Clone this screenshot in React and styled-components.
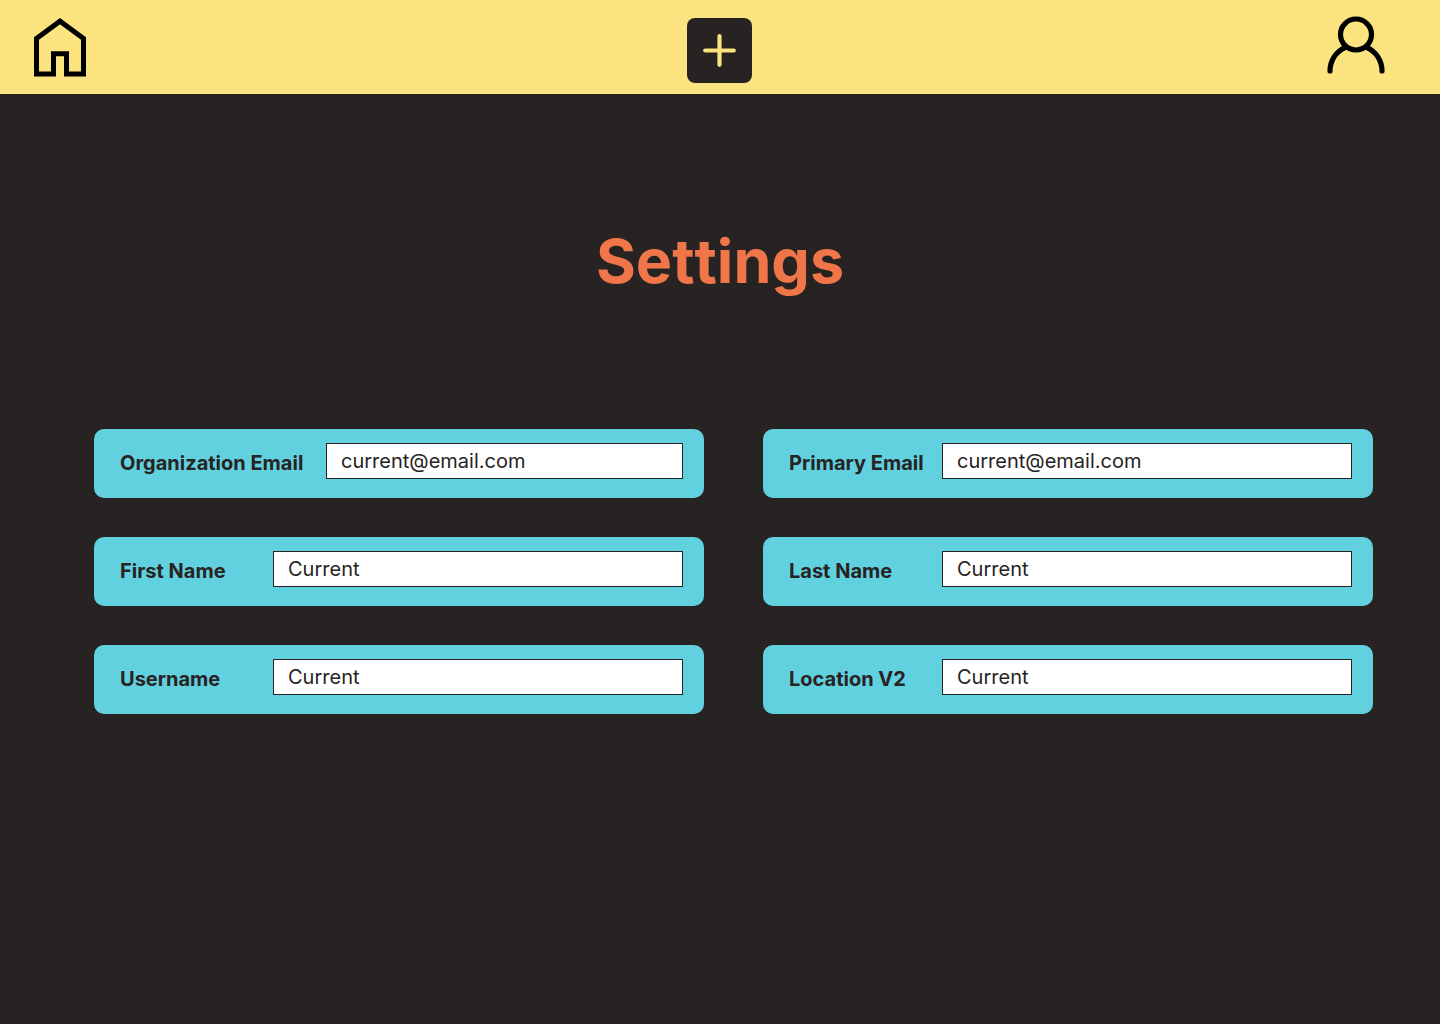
import React from "react";
import styled, { createGlobalStyle } from "styled-components";

const colors = {
  ink: "#272323",
  yellow: "#fbe480",
  orange: "#f0764a",
  aqua: "#61d1df",
};

const GlobalStyle = createGlobalStyle`
  *, *::before, *::after { box-sizing: border-box; }
  body {
    margin: 0;
    background: ${colors.ink};
    color: ${colors.ink};
    font-family: Inter, "Liberation Sans", sans-serif;
  }
`;

const Page = styled.div`
  min-height: 100vh;
  background: ${colors.ink};
`;

const TopBar = styled.header`
  display: grid;
  grid-template-columns: 1fr auto 1fr;
  align-items: start;
  height: 94px;
  padding: 16px 1px 0 0;
  background: ${colors.yellow};
`;

const NavLink = styled.a`
  display: flex;
  justify-self: ${({ $side }) => $side};
  padding: 0 ${({ $side }) => ($side === "end" ? "53px" : "32px")};
  color: #000;
`;

const AddButton = styled.button`
  display: grid;
  place-items: center;
  width: 65px;
  height: 65px;
  margin: 2px 0 0;
  padding: 0;
  border: 0;
  border-radius: 8px;
  background: ${colors.ink};
  color: ${colors.yellow};
  cursor: pointer;
`;

const Main = styled.main`
  padding: 128px 67px 64px 94px;
`;

const Title = styled.h1`
  margin: 0 27px 129px 0;
  color: ${colors.orange};
  font-size: 61px;
  line-height: 78px;
  font-weight: 700;
  font-kerning: none;
  text-align: center;
`;

const SettingsForm = styled.form`
  display: grid;
  grid-template-columns: repeat(2, minmax(0, 1fr));
  gap: 39px 59px;
`;

const FieldCard = styled.div`
  display: flex;
  align-items: flex-start;
  padding: 14px 21px 19px 26px;
  border-radius: 10px;
  background: ${colors.aqua};
`;

const FieldLabel = styled.label`
  flex: none;
  width: ${({ $wide }) => ($wide ? "206px" : "153px")};
  padding-top: 8px;
  font-size: 20px;
  line-height: 24px;
  font-weight: 700;
  white-space: nowrap;
`;

const FieldInput = styled.input`
  flex: 1;
  min-width: 0;
  height: 36px;
  margin: 0;
  padding: 0 14px;
  border: 1px solid ${colors.ink};
  border-radius: 0;
  background: #fff;
  color: ${colors.ink};
  font-family: inherit;
  font-size: 20px;
  font-weight: 400;
  line-height: 24px;
`;

const fields = [
  { id: "organization-email", label: "Organization Email", value: "current@email.com", type: "email", wide: true },
  { id: "primary-email", label: "Primary Email", value: "current@email.com", type: "email" },
  { id: "first-name", label: "First Name", value: "Current", type: "text" },
  { id: "last-name", label: "Last Name", value: "Current", type: "text" },
  { id: "username", label: "Username", value: "Current", type: "text" },
  { id: "location", label: "Location V2", value: "Current", type: "text" },
];

const HomeIcon = () => (
  <svg width="56" height="62" viewBox="0 0 56 62" fill="none" stroke="currentColor" strokeWidth="5" aria-hidden="true">
    <path d="M4.500 58V22.500L28 5.200L51.500 22.500V58H34.500V37.700H21.500V58Z" />
  </svg>
);

const PlusIcon = () => (
  <svg width="33" height="33" viewBox="0 0 33 33" fill="none" stroke="currentColor" strokeWidth="4.200" strokeLinecap="round" aria-hidden="true">
    <path d="M16.500 2.200V30.800M2.200 16.500H30.800" />
  </svg>
);

const UserIcon = () => (
  <svg width="60" height="60" viewBox="0 0 60 60" fill="none" stroke="currentColor" strokeWidth="5.200" strokeLinecap="round" aria-hidden="true">
    <circle cx="30" cy="18.500" r="15.500" />
    <path d="M4 55C4 44.500 10 35.500 19 31.600M41 31.600C50 35.500 56 44.500 56 55" />
  </svg>
);

export default function App() {
  return (
    <Page>
      <GlobalStyle />
      <TopBar>
        <NavLink href="#home" aria-label="Home" $side="start">
          <HomeIcon />
        </NavLink>
        <AddButton type="button" aria-label="Add">
          <PlusIcon />
        </AddButton>
        <NavLink href="#profile" aria-label="Profile" $side="end">
          <UserIcon />
        </NavLink>
      </TopBar>
      <Main>
        <Title>Settings</Title>
        <SettingsForm>
          {fields.map(({ id, label, value, type, wide }) => (
            <FieldCard key={id}>
              <FieldLabel htmlFor={id} $wide={wide}>{label}</FieldLabel>
              <FieldInput id={id} type={type} defaultValue={value} />
            </FieldCard>
          ))}
        </SettingsForm>
      </Main>
    </Page>
  );
}
